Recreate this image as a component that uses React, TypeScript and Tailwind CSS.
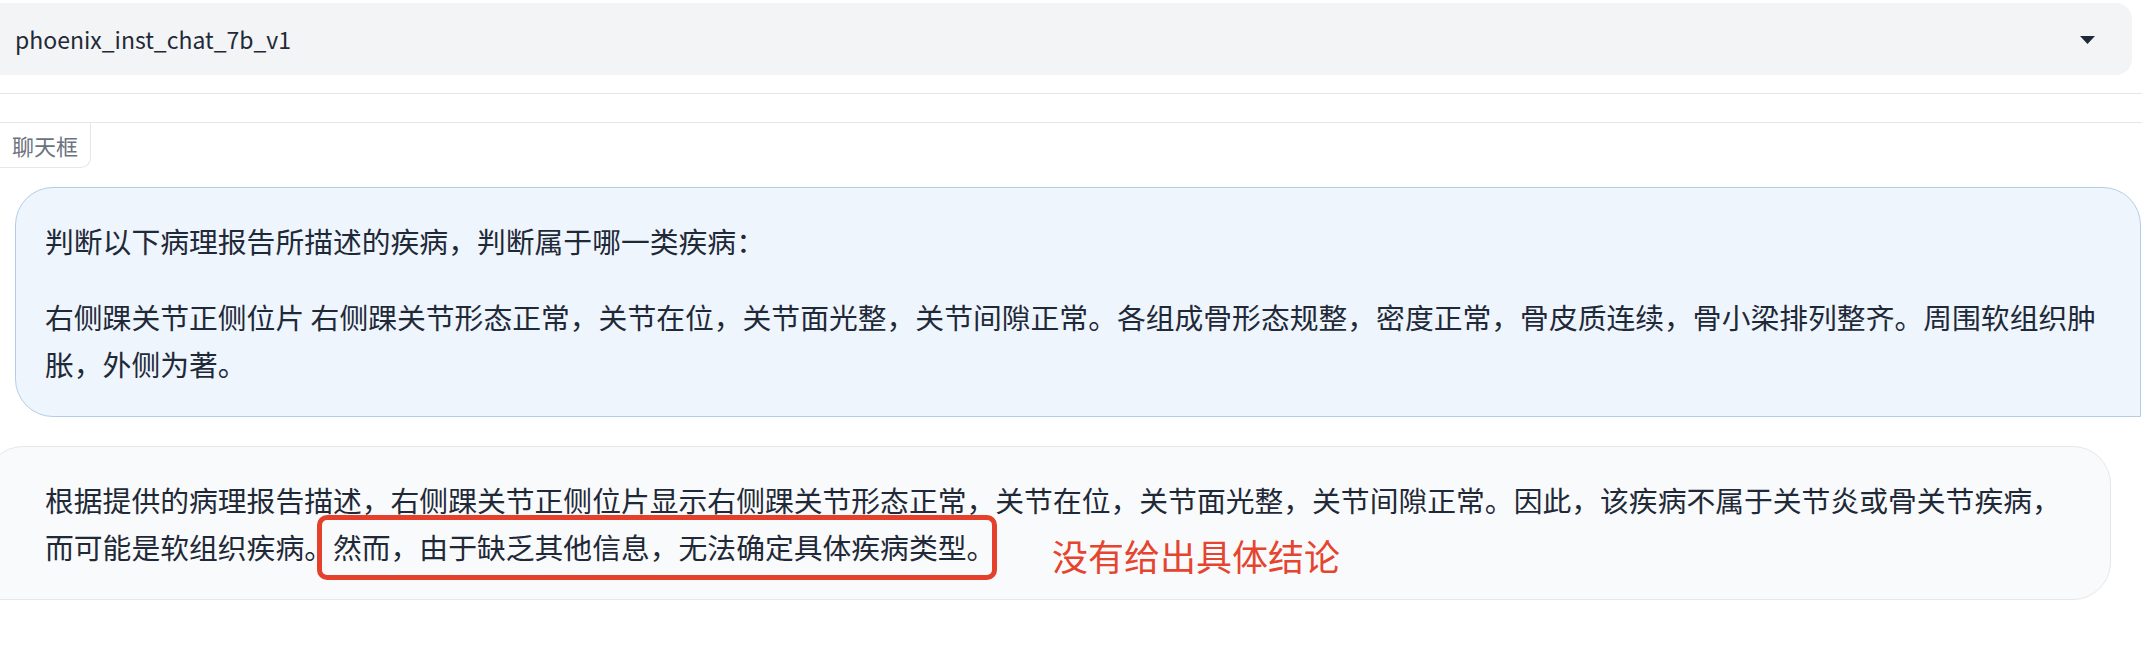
import React from "react";

const CJK = "font-['Noto_Sans_CJK_SC','Noto_Sans',sans-serif]";

export default function App() {
  return (
    <div className={`w-[2142px] h-[670px] overflow-hidden bg-white ${CJK}`}>
      {/* model dropdown */}
      <div className="pt-[3px]">
        <div className="h-[72px] -ml-[20px] mr-[10px] bg-[#f3f4f6] rounded-[16px] flex items-center justify-between pl-[35px] pr-[37px]">
          <span className="text-[23px] text-[#1f2937] leading-none">phoenix_inst_chat_7b_v1</span>
          <svg width="15" height="8" viewBox="0 0 15 8" className="mt-[2px]">
            <path d="M0 0 H15 L7.5 8 Z" fill="#1f2937" />
          </svg>
        </div>
      </div>

      {/* separator block */}
      <div className="mt-[18px] h-[29px] border-t border-[#e5e7eb]" />

      {/* chatbot block */}
      <div className="border-t border-[#e5e7eb]">
        <div className="flex">
          <div className="h-[45px] w-[91px] flex items-center pl-[12px] border-r border-b border-[#e5e7eb] rounded-br-[10px] text-[22px] text-[#6b7280] leading-none">
            聊天框
          </div>
        </div>

        <div className="flex flex-col mt-[19px] gap-[29px]">
          {/* user message */}
          <div className="ml-[15px] w-[2126px] border border-[#b3cde8] bg-[#eef5fd] rounded-[38px] rounded-br-none px-[29px] py-[29px] text-[28.8px] leading-[47px] text-[#1f2937]">
            <p className="mb-[29px]">判断以下病理报告所描述的疾病，判断属于哪一类疾病：</p>
            <p>
              右侧踝关节正侧位片 右侧踝关节形态正常，关节在位，关节面光整，关节间隙正常。各组成骨形态规整，密度正常，骨皮质连续，骨小梁排列整齐。周围软组织肿胀，外侧为著。
            </p>
          </div>

          {/* bot message */}
          <div className="relative -ml-[15px] w-[2126px] border border-[#e5e7eb] bg-[#f9fafb] rounded-[38px] rounded-bl-none pl-[59px] pr-[30px] py-[29px] text-[28.8px] leading-[47px] text-[#1f2937]">
            <p>
              根据提供的病理报告描述，右侧踝关节正侧位片显示右侧踝关节形态正常，关节在位，关节面光整，关节间隙正常。因此，该疾病不属于关节炎或骨关节疾病，而可能是软组织疾病。然而，由于缺乏其他信息，无法确定具体疾病类型。
            </p>
            <div className="absolute left-[331px] top-[68px] w-[680px] h-[65px] border-[5px] border-[#e5402b] rounded-[10px]" />
            <div className="absolute left-[1066px] top-[90px] text-[36px] leading-none text-[#e5452f] whitespace-nowrap">
              没有给出具体结论
            </div>
          </div>
        </div>
      </div>
    </div>
  );
}
